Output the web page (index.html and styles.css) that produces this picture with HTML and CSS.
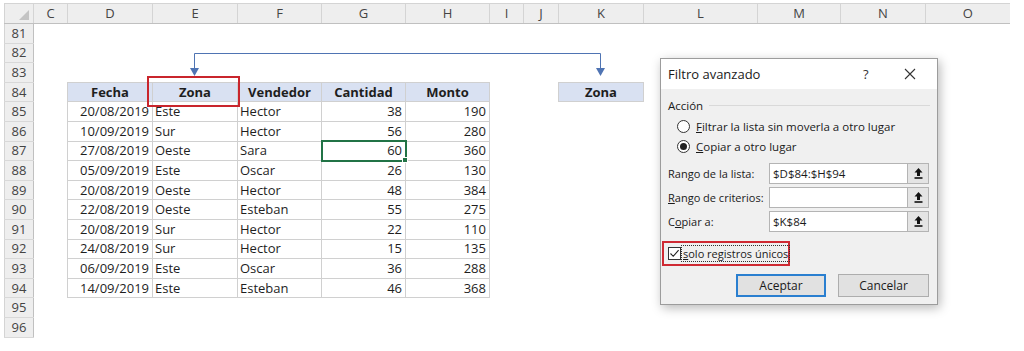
FILE: index.html
```html
<!DOCTYPE html>
<html lang="es">
<head>
    <meta charset="UTF-8">
    <title>Filtro avanzado</title>
    <link rel="stylesheet" href="styles.css">
</head>
<body>
    <div class="page">
        <table class="sheet">
            <colgroup>
                <col style="width:29px"><col style="width:34px"><col style="width:85px"><col style="width:85px">
                <col style="width:84px"><col style="width:84px"><col style="width:84px"><col style="width:34px">
                <col style="width:35px"><col style="width:85px"><col style="width:114px"><col style="width:83px">
                <col style="width:85px"><col style="width:84px">
            </colgroup>
            <tr class="col-head">
                <td class="corner"><span class="tri"></span></td>
                <td>C</td><td>D</td><td>E</td><td>F</td><td>G</td><td>H</td><td>I</td>
                <td>J</td><td>K</td><td>L</td><td>M</td><td>N</td><td>O</td>
            </tr>
            <tr><td class="rn">81</td><td colspan="13"></td></tr>
            <tr><td class="rn">82</td><td colspan="13"></td></tr>
            <tr><td class="rn">83</td><td colspan="13"></td></tr>
            <tr>
                <td class="rn">84</td><td></td>
                <td class="cell hd">Fecha</td><td class="cell hd">Zona</td><td class="cell hd">Vendedor</td>
                <td class="cell hd">Cantidad</td><td class="cell hd">Monto</td>
                <td></td><td></td><td class="cell hd">Zona</td><td colspan="4"></td>
            </tr>
            <tr>
                <td class="rn">85</td><td></td>
                <td class="cell num">20/08/2019</td><td class="cell txt">Este</td><td class="cell txt">Hector</td>
                <td class="cell num">38</td><td class="cell num">190</td><td colspan="7"></td>
            </tr>
            <tr>
                <td class="rn">86</td><td></td>
                <td class="cell num">10/09/2019</td><td class="cell txt">Sur</td><td class="cell txt">Hector</td>
                <td class="cell num">56</td><td class="cell num">280</td><td colspan="7"></td>
            </tr>
            <tr>
                <td class="rn">87</td><td></td>
                <td class="cell num">27/08/2019</td><td class="cell txt">Oeste</td><td class="cell txt">Sara</td>
                <td class="cell num sel">60</td><td class="cell num">360</td><td colspan="7"></td>
            </tr>
            <tr>
                <td class="rn">88</td><td></td>
                <td class="cell num">05/09/2019</td><td class="cell txt">Este</td><td class="cell txt">Oscar</td>
                <td class="cell num">26</td><td class="cell num">130</td><td colspan="7"></td>
            </tr>
            <tr>
                <td class="rn">89</td><td></td>
                <td class="cell num">20/08/2019</td><td class="cell txt">Oeste</td><td class="cell txt">Hector</td>
                <td class="cell num">48</td><td class="cell num">384</td><td colspan="7"></td>
            </tr>
            <tr>
                <td class="rn">90</td><td></td>
                <td class="cell num">22/08/2019</td><td class="cell txt">Oeste</td><td class="cell txt">Esteban</td>
                <td class="cell num">55</td><td class="cell num">275</td><td colspan="7"></td>
            </tr>
            <tr>
                <td class="rn">91</td><td></td>
                <td class="cell num">20/08/2019</td><td class="cell txt">Sur</td><td class="cell txt">Hector</td>
                <td class="cell num">22</td><td class="cell num">110</td><td colspan="7"></td>
            </tr>
            <tr>
                <td class="rn">92</td><td></td>
                <td class="cell num">24/08/2019</td><td class="cell txt">Sur</td><td class="cell txt">Hector</td>
                <td class="cell num">15</td><td class="cell num">135</td><td colspan="7"></td>
            </tr>
            <tr>
                <td class="rn">93</td><td></td>
                <td class="cell num">06/09/2019</td><td class="cell txt">Este</td><td class="cell txt">Oscar</td>
                <td class="cell num">36</td><td class="cell num">288</td><td colspan="7"></td>
            </tr>
            <tr>
                <td class="rn">94</td><td></td>
                <td class="cell num">14/09/2019</td><td class="cell txt">Este</td><td class="cell txt">Esteban</td>
                <td class="cell num">46</td><td class="cell num">368</td><td colspan="7"></td>
            </tr>
            <tr><td class="rn">95</td><td colspan="13"></td></tr>
            <tr><td class="rn">96</td><td colspan="13"></td></tr>
        </table>

        <!-- connector arrow from E84 to K84 and the red marker -->
        <svg class="overlay" width="1024" height="351" viewBox="0 0 1024 351">
            <path d="M194.5 70 V53.5 H600.5 V70" fill="none" stroke="#4f74b3" stroke-width="1"/>
            <polygon points="190,68 199,68 194.5,76" fill="#4f74b3"/>
            <polygon points="596,68 605,68 600.5,76" fill="#4f74b3"/>
            <rect x="148" y="77" width="91" height="29" fill="none" stroke="#c9252c" stroke-width="2"/>
        </svg>

        <div class="dialog">
            <div class="dlg-title">
                <span class="dlg-name">Filtro avanzado</span>
                <span class="dlg-help">?</span>
                <svg class="dlg-close" width="12" height="12" viewBox="0 0 12 12">
                    <path d="M1 1 L11 11 M11 1 L1 11" stroke="#333" stroke-width="1.1"/>
                </svg>
            </div>
            <div class="dlg-body">
                <div class="group">
                    <span>Acción</span>
                    <span class="group-line"></span>
                </div>
                <div class="radio-row">
                    <span class="radio"></span>
                    <span><u>F</u>iltrar la lista sin moverla a otro lugar</span>
                </div>
                <div class="radio-row">
                    <span class="radio on"></span>
                    <span><u>C</u>opiar a otro lugar</span>
                </div>
                <div class="field first">
                    <span class="field-label">Ran<u>g</u>o de la lista:</span>
                    <span class="input">$D$84:$H$94</span>
                    <span class="pick"><svg width="9" height="11" viewBox="0 0 9 11"><path d="M4.5 0 L8.5 4.5 H6 V8 H3 V4.5 H0.5 Z" fill="#111"/><rect x="0.5" y="9.2" width="8" height="1.6" fill="#111"/></svg></span>
                </div>
                <div class="field">
                    <span class="field-label"><u>R</u>ango de criterios:</span>
                    <span class="input"></span>
                    <span class="pick"><svg width="9" height="11" viewBox="0 0 9 11"><path d="M4.5 0 L8.5 4.5 H6 V8 H3 V4.5 H0.5 Z" fill="#111"/><rect x="0.5" y="9.2" width="8" height="1.6" fill="#111"/></svg></span>
                </div>
                <div class="field">
                    <span class="field-label">C<u>o</u>piar a:</span>
                    <span class="input">$K$84</span>
                    <span class="pick"><svg width="9" height="11" viewBox="0 0 9 11"><path d="M4.5 0 L8.5 4.5 H6 V8 H3 V4.5 H0.5 Z" fill="#111"/><rect x="0.5" y="9.2" width="8" height="1.6" fill="#111"/></svg></span>
                </div>
                <div class="check-row">
                    <span class="check"><svg width="11" height="11" viewBox="0 0 11 11"><path d="M1.5 5.5 L4.2 8.3 L9.6 2.2" fill="none" stroke="#222" stroke-width="1.1"/></svg></span>
                    <span class="focus"><u>s</u>olo registros únicos</span>
                </div>
                <div class="buttons">
                    <span class="btn default">Aceptar</span>
                    <span class="btn">Cancelar</span>
                </div>
            </div>
        </div>
    </div>
</body>
</html>
```

FILE: styles.css
```css
body {
    margin: 0;
    background: #fff;
    font-family: "Open Sans", "Noto Sans", sans-serif;
}

.page {
    position: relative;
    width: 1024px;
    height: 351px;
    padding: 3px 0 0 4px;
    box-sizing: border-box;
    overflow: hidden;
}

.sheet {
    border-collapse: collapse;
    table-layout: fixed;
    width: 1005px;
    font-size: 13px;
    color: #1e1e1e;
}

.sheet tr {
    height: 19.6px;
}

.sheet td {
    padding: 0 3px;
    white-space: nowrap;
    line-height: 17px;
}

.col-head {
    height: 20px !important;
}

.col-head td {
    background: #eeeeee;
    color: #444;
    text-align: center;
    border-left: 1px solid #d4d4d4;
    border-top: 1px solid #d4d4d4;
    border-bottom: 1px solid #c0c0c0;
}

.corner {
    position: relative;
}

.tri {
    position: absolute;
    right: 4px;
    bottom: 3px;
    width: 0;
    height: 0;
    border-left: 10px solid transparent;
    border-bottom: 10px solid #c4c4c4;
}

.rn {
    background: #eeeeee;
    color: #444;
    text-align: center;
    border-left: 1px solid #d4d4d4;
    border-right: 1px solid #c0c0c0;
    border-bottom: 1px solid #d8d8d8;
}

.cell {
    border: 1px solid #d0d0d0;
}

.hd {
    background: #d9e1f2;
    font-weight: bold;
    text-align: center;
}

.num {
    text-align: right;
}

.sheet .txt {
    text-align: left;
    padding-left: 2px;
}

.sel {
    position: relative;
    outline: 2px solid #217346;
    outline-offset: -1px;
}

.sel::after {
    content: "";
    position: absolute;
    right: -3px;
    bottom: -3px;
    width: 4px;
    height: 4px;
    background: #217346;
    border: 1px solid #fff;
}

.overlay {
    position: absolute;
    left: 0;
    top: 0;
    pointer-events: none;
}

/* dialog */

.dialog {
    position: absolute;
    left: 660px;
    top: 58px;
    width: 278px;
    height: 247px;
    box-sizing: border-box;
    border: 1px solid #9c9c9c;
    background: #f0f0f0;
    box-shadow: 2px 3px 10px rgba(0, 0, 0, 0.28);
    font-size: 11.5px;
    color: #1a1a1a;
    display: flex;
    flex-direction: column;
}

.dlg-title {
    height: 30px;
    background: #fff;
    display: flex;
    align-items: center;
    padding-left: 7px;
    font-size: 13px;
}

.dlg-name {
    flex: 1;
}

.dlg-help {
    width: 12px;
    margin-right: 29px;
    color: #333;
}

.dlg-close {
    margin-right: 21px;
}

.dlg-body {
    padding: 8px 7px 0 7px;
}

.group {
    display: flex;
    align-items: center;
    height: 16px;
}

.group-line {
    flex: 1;
    height: 1px;
    background: #d9d9d9;
    margin-left: 6px;
}

.radio-row {
    display: flex;
    align-items: center;
    height: 20px;
    padding-left: 9px;
}

.radio-row:nth-child(2) {
    margin-top: 3px;
}

.radio {
    width: 11px;
    height: 11px;
    border: 1px solid #333;
    border-radius: 50%;
    background: #fff;
    margin-right: 6px;
    display: flex;
    align-items: center;
    justify-content: center;
}

.radio.on::after {
    content: "";
    width: 7px;
    height: 7px;
    border-radius: 50%;
    background: #222;
}

.field {
    display: flex;
    align-items: center;
    height: 21px;
    margin-top: 3px;
}

.field.first {
    margin-top: 7px;
}

.field-label {
    width: 101px;
    font-size: 11px;
    white-space: nowrap;
}

.input {
    width: 139px;
    height: 21px;
    box-sizing: border-box;
    border: 1px solid #b4b4b4;
    background: #fff;
    padding-left: 3px;
    line-height: 19px;
}

.pick {
    width: 21px;
    height: 21px;
    box-sizing: border-box;
    border: 1px solid #b4b4b4;
    border-left: none;
    background: #e4e4e4;
    display: flex;
    align-items: center;
    justify-content: center;
}

.check-row {
    display: flex;
    align-items: center;
    margin: 9px 0 0 -6px;
    width: 128px;
    height: 25px;
    box-sizing: border-box;
    border: 2px solid #cf2a33;
    padding-left: 4px;
    white-space: nowrap;
}

.check {
    flex: none;
    width: 13px;
    height: 13px;
    box-sizing: border-box;
    border: 1px solid #333;
    background: #fff;
    display: flex;
    align-items: center;
    justify-content: center;
    margin-right: 1px;
}

.focus {
    outline: 1px dotted #333;
    outline-offset: 0;
    padding: 0 1px;
    line-height: 15px;
    font-size: 11px;
}

.buttons {
    display: flex;
    justify-content: flex-end;
    gap: 12px;
    margin-top: 8px;
    padding-right: 1px;
}

.btn {
    width: 91px;
    height: 23px;
    box-sizing: border-box;
    border: 1px solid #adadad;
    background: #e1e1e1;
    display: flex;
    align-items: center;
    justify-content: center;
    font-size: 12px;
}

.btn.default {
    width: 90px;
    border: 2px solid #2a7fd0;
}
```
